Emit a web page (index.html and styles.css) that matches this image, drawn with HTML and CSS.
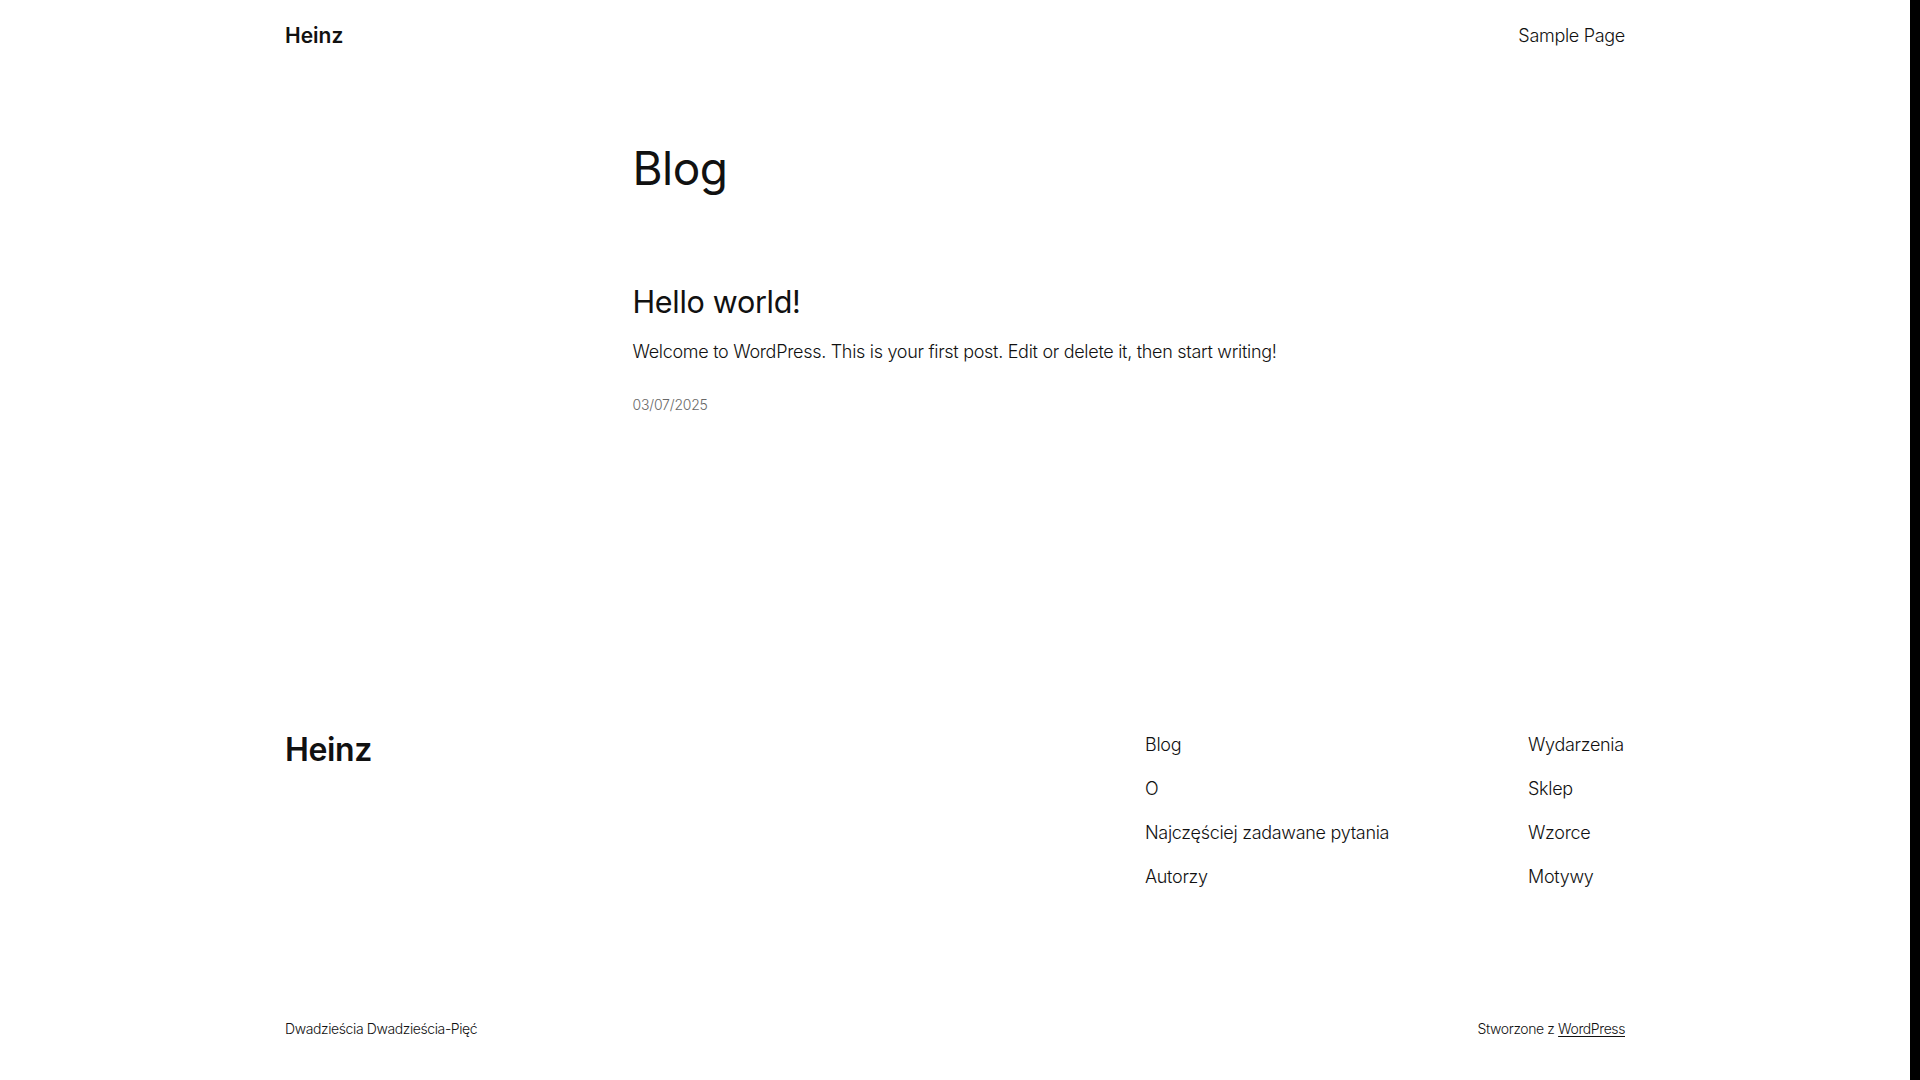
FILE: index.html
```html
<!DOCTYPE html>
<html lang="pl">
<head>
<meta charset="utf-8">
<title>Blog – Heinz</title>
<link rel="stylesheet" href="styles.css">
</head>
<body>
<div class="shell">
<div class="page">
  <header class="site-header wrap">
    <a class="site-title" href="#">Heinz</a>
    <nav class="top-nav"><a href="#">Sample Page</a></nav>
  </header>

  <main class="content">
    <h1 class="query-title">Blog</h1>
    <article class="post">
      <h2 class="post-title"><a href="#">Hello world!</a></h2>
      <p class="excerpt">Welcome to WordPress. This is your first post. Edit or delete it, then start writing!</p>
      <div class="post-date">03/07/2025</div>
    </article>
  </main>

  <footer class="site-footer wrap">
    <div class="footer-top">
      <a class="footer-title" href="#">Heinz</a>
      <div class="footer-navs">
        <ul class="footer-nav">
          <li><a href="#">Blog</a></li>
          <li><a href="#">O</a></li>
          <li><a href="#">Najczęściej zadawane pytania</a></li>
          <li><a href="#">Autorzy</a></li>
        </ul>
        <ul class="footer-nav">
          <li><a href="#">Wydarzenia</a></li>
          <li><a href="#">Sklep</a></li>
          <li><a href="#">Wzorce</a></li>
          <li><a href="#">Motywy</a></li>
        </ul>
      </div>
    </div>
    <div class="footer-bottom">
      <span>Dwadzieścia Dwadzieścia-Pięć</span>
      <span>Stworzone z <a class="wp-link" href="#">WordPress</a></span>
    </div>
  </footer>
</div>
<div class="scrollbar"></div>
</div>
</body>
</html>
```

FILE: styles.css
```css
html, body {
  margin: 0;
  padding: 0;
  background: #ffffff;
}

body {
  font-family: "Inter", "Noto Sans", "DejaVu Sans", sans-serif;
  font-weight: 300;
  color: #111111;
  font-size: 18px;
}

a {
  color: inherit;
  text-decoration: none;
}

.shell {
  display: flex;
  min-height: 100vh;
}

.page {
  flex: 1;
  min-width: 0;
}

.scrollbar {
  width: 10px;
  flex: 0 0 10px;
  background: #000000;
}

.wrap {
  max-width: 1340px;
  margin: 0 auto;
}

/* Header */
.site-header {
  height: 71px;
  display: flex;
  align-items: center;
  justify-content: space-between;
}

.site-title {
  font-size: 21px;
  line-height: 28px;
  font-weight: 600;
  letter-spacing: 0;
}

.top-nav a {
  font-size: 18px;
  line-height: 28px;
  font-weight: 300;
  letter-spacing: -0.3px;
}

/* Main */
.content {
  width: 645px;
  margin: 0 auto;
  padding-top: 70px;
}

.query-title {
  margin: 0;
  font-size: 46px;
  line-height: 55px;
  font-weight: 400;
  letter-spacing: -0.5px;
}

.post {
  margin-top: 88px;
}

.post-title {
  margin: 0;
  font-size: 30.5px;
  line-height: 36px;
  font-weight: 400;
  letter-spacing: -0.3px;
}

.excerpt {
  margin: 17px 0 0;
  font-size: 18px;
  line-height: 29px;
  letter-spacing: -0.3px;
}

.post-date {
  margin-top: 28.5px;
  font-size: 14px;
  line-height: 20px;
  color: #686868;
  letter-spacing: -0.2px;
}

/* Footer */
.site-footer {
  margin-top: 316px;
  padding-bottom: 40px;
}

.footer-top {
  display: flex;
  justify-content: space-between;
  align-items: flex-start;
}

.footer-title {
  font-size: 32px;
  line-height: 38px;
  font-weight: 600;
  letter-spacing: -0.4px;
}

.footer-navs {
  display: grid;
  grid-template-columns: 383px 97px;
}

.footer-nav {
  list-style: none;
  margin: 0;
  padding: 0;
  display: flex;
  flex-direction: column;
  gap: 17px;
}

.footer-nav li {
  font-size: 18px;
  line-height: 27px;
  letter-spacing: -0.3px;
  white-space: nowrap;
}

.footer-bottom {
  margin-top: 129px;
  display: flex;
  justify-content: space-between;
  font-size: 14px;
  line-height: 20px;
  letter-spacing: -0.4px;
}

.wp-link {
  text-decoration: underline;
  text-underline-offset: 2px;
}
```
